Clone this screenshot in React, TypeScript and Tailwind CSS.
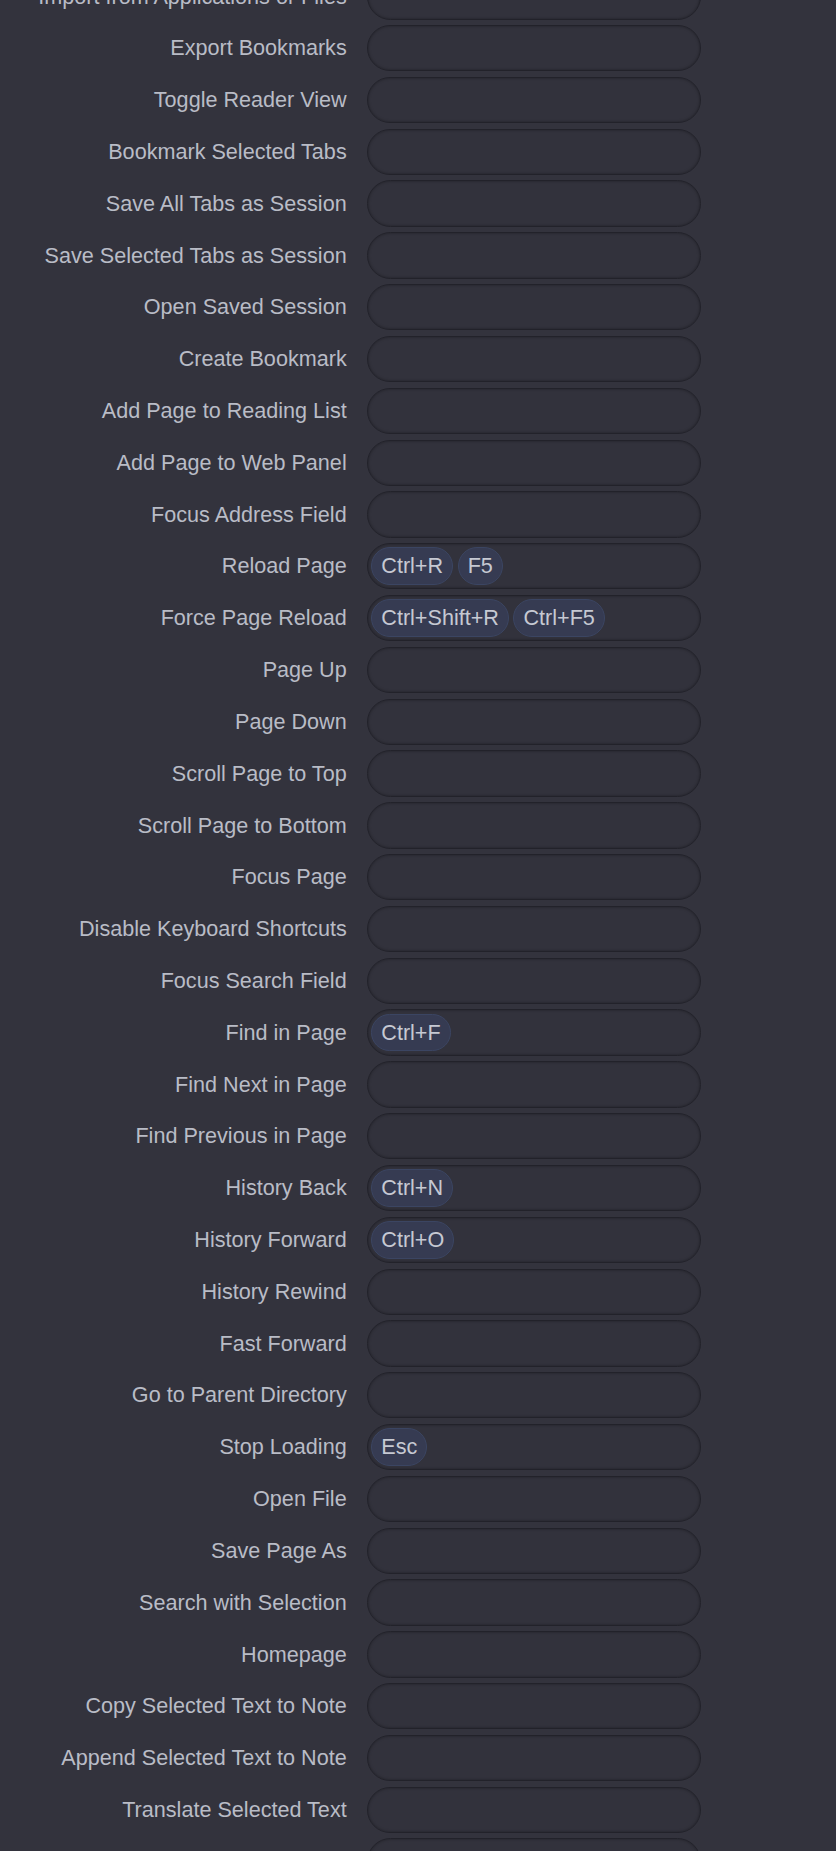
import React from 'react'

type Row = { label: string; keys?: string[] }

const rows: Row[] = [
  { label: 'Import from Applications or Files' },
  { label: 'Export Bookmarks' },
  { label: 'Toggle Reader View' },
  { label: 'Bookmark Selected Tabs' },
  { label: 'Save All Tabs as Session' },
  { label: 'Save Selected Tabs as Session' },
  { label: 'Open Saved Session' },
  { label: 'Create Bookmark' },
  { label: 'Add Page to Reading List' },
  { label: 'Add Page to Web Panel' },
  { label: 'Focus Address Field' },
  { label: 'Reload Page', keys: ['Ctrl+R', 'F5'] },
  { label: 'Force Page Reload', keys: ['Ctrl+Shift+R', 'Ctrl+F5'] },
  { label: 'Page Up' },
  { label: 'Page Down' },
  { label: 'Scroll Page to Top' },
  { label: 'Scroll Page to Bottom' },
  { label: 'Focus Page' },
  { label: 'Disable Keyboard Shortcuts' },
  { label: 'Focus Search Field' },
  { label: 'Find in Page', keys: ['Ctrl+F'] },
  { label: 'Find Next in Page' },
  { label: 'Find Previous in Page' },
  { label: 'History Back', keys: ['Ctrl+N'] },
  { label: 'History Forward', keys: ['Ctrl+O'] },
  { label: 'History Rewind' },
  { label: 'Fast Forward' },
  { label: 'Go to Parent Directory' },
  { label: 'Stop Loading', keys: ['Esc'] },
  { label: 'Open File' },
  { label: 'Save Page As' },
  { label: 'Search with Selection' },
  { label: 'Homepage' },
  { label: 'Copy Selected Text to Note' },
  { label: 'Append Selected Text to Note' },
  { label: 'Translate Selected Text' },
  // next row is only peeking in at the bottom edge
  { label: '' },
]

const ShortcutRow: React.FC<{ row: Row }> = ({ row }) => (
  <div className="flex items-center gap-[20.6px]">
    <div className="w-[346.7px] shrink-0 text-right text-[#b9bcc6] whitespace-nowrap">{row.label}</div>
    <div className="flex h-[46.3px] w-[333.4px] shrink-0 items-center gap-[4.6px] rounded-full border border-[#22222a] bg-[#32323c] px-[3px] shadow-[inset_0_0_3px_rgba(0,0,0,0.35)]">
      {row.keys?.map((k) => (
        <span
          key={k}
          className="flex h-[37.7px] items-center rounded-full border border-[#3b4562] bg-[#363b52] px-[9px] text-[#c6c9d2]"
        >
          {k}
        </span>
      ))}
    </div>
  </div>
)

const App: React.FC = () => {
  return (
    <div
      className="min-h-screen w-full overflow-hidden bg-[#33333d] text-[21.6px] leading-none"
      style={{ fontFamily: '"Liberation Sans", Arial, sans-serif' }}
    >
      <div className="-mt-[26.8px] flex flex-col gap-[5.53px]">
        {rows.map((r, i) => (
          <ShortcutRow key={i} row={r} />
        ))}
      </div>
    </div>
  )
}

export default App
